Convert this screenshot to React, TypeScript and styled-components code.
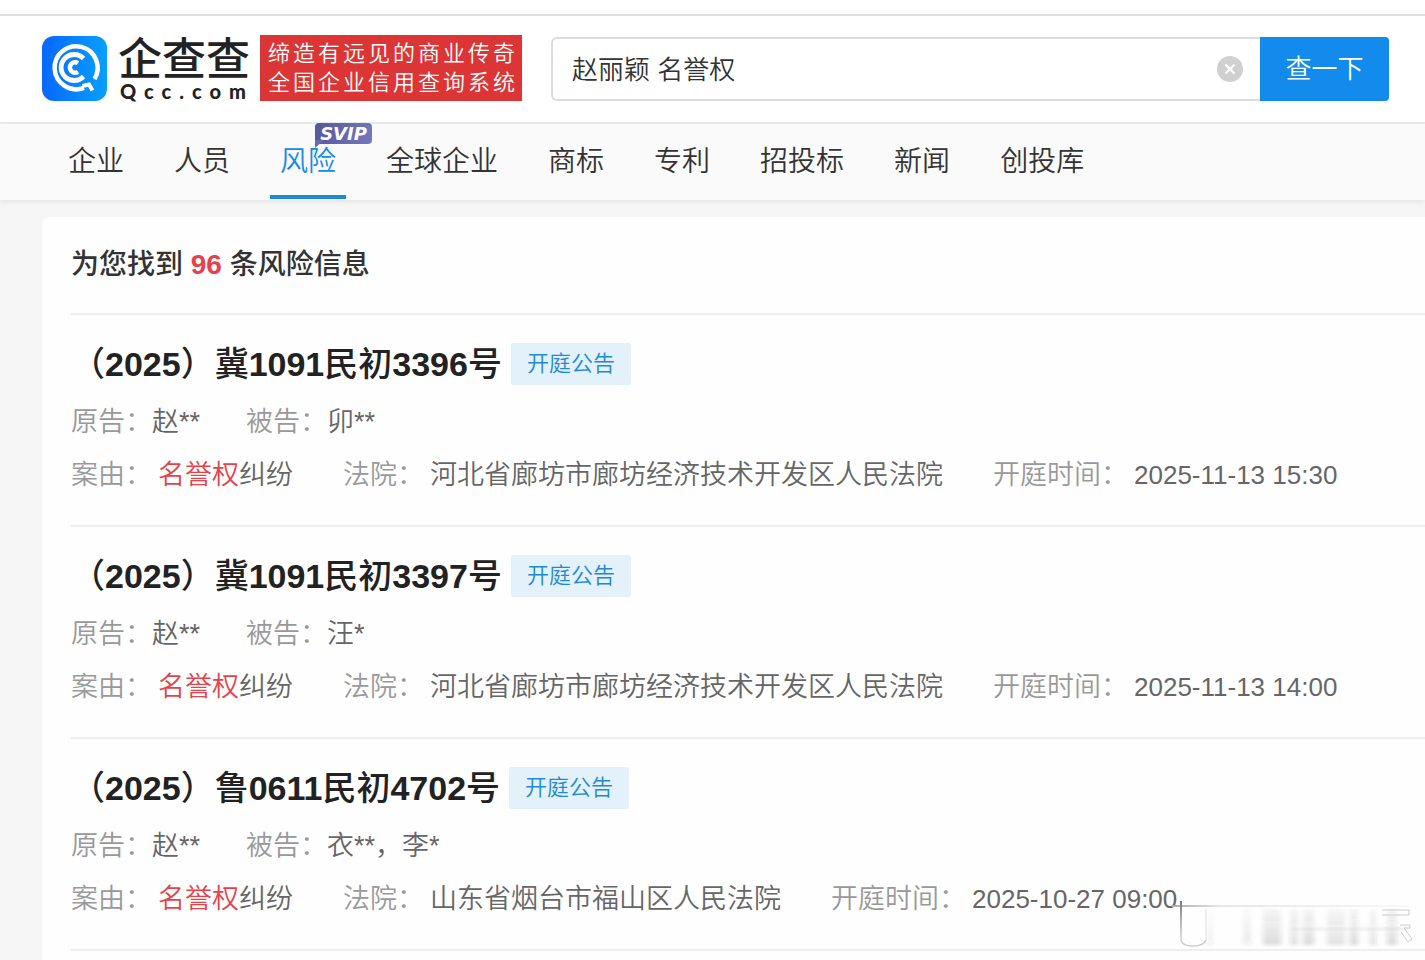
import React from "react";
import styled, { createGlobalStyle } from "styled-components";

const GlobalStyle = createGlobalStyle`
  * { box-sizing: border-box; }
  body {
    margin: 0;
    background: #f6f6f6;
    color: #333;
    font-family: "Liberation Sans", "Noto Sans CJK SC", sans-serif;
    font-weight: 350;
  }
`;

const Page = styled.div`
  min-height: 100vh;
  display: flex;
  flex-direction: column;
`;

const TopStrip = styled.div`
  height: 16px;
  background: #fff;
  border-bottom: 2px solid #e0e0e0;
`;

const Header = styled.header`
  display: flex;
  align-items: flex-start;
  height: 108px;
  padding: 19px 36px 0 42px;
  background: #fff;
  border-bottom: 2px solid #ebebeb;
`;

const Brand = styled.a`
  display: flex;
  align-items: center;
  gap: 11px;
  height: 66px;
  color: #222;
  text-decoration: none;
`;

const BrandText = styled.span`
  display: flex;
  flex-direction: column;
`;

const BrandName = styled.span`
  font-size: 44px;
  line-height: 46px;
  font-weight: 500;
`;

const BrandDomain = styled.span`
  padding-left: 2px;
  font-family: "Lato", sans-serif;
  font-size: 20px;
  line-height: 16px;
  font-weight: 900;
  letter-spacing: 8px;
  margin-right: -8px;
`;

const Slogan = styled.p`
  margin: 0 29px 0 10px;
  padding: 4px 4px 4px 8px;
  background: #dc3535;
  color: #fff;
  font-size: 22px;
  line-height: 29px;
  letter-spacing: 3px;
  white-space: nowrap;
`;

const SearchForm = styled.form`
  flex: 1;
  display: flex;
  height: 64px;
  margin-top: 2px;
`;

const SearchField = styled.div`
  flex: 1;
  min-width: 0;
  display: flex;
  align-items: center;
  padding: 0 17px 0 19px;
  border: 2px solid #dcdcdc;
  border-right: 0;
  border-radius: 6px 0 0 6px;
`;

const SearchInput = styled.input`
  flex: 1;
  min-width: 0;
  border: 0;
  padding: 0 0 4px;
  outline: 0;
  background: none;
  color: #333;
  font: inherit;
  font-size: 26px;
`;

const ClearButton = styled.button`
  display: flex;
  padding: 0;
  border: 0;
  background: none;
`;

const SubmitButton = styled.button`
  width: 129px;
  padding: 0 0 6px;
  border: 0;
  border-radius: 0 4px 4px 0;
  background: #128bed;
  color: #fff;
  font: inherit;
  font-size: 26px;
`;

const Nav = styled.nav`
  display: flex;
  gap: 30px;
  height: 76px;
  padding: 0 58px;
  background: #fafafa;
  box-shadow: 0 2px 6px rgba(0, 0, 0, 0.08);
`;

const Tab = styled.a<{ $active?: boolean }>`
  position: relative;
  padding: 0 10px;
  font-size: 28px;
  line-height: 76px;
  height: 75px;
  white-space: nowrap;
  text-decoration: none;
  color: ${(p) => (p.$active ? "#128bed" : "#333")};
  border-bottom: 4px solid ${(p) => (p.$active ? "#1b8bd4" : "transparent")};
`;

const Badge = styled.span`
  position: absolute;
  left: 45px;
  top: -1px;
  width: 57px;
  height: 21px;
  border-radius: 4px;
  background: linear-gradient(100deg, #57579f, #7676bd);
  color: #fff;
  font-family: "DejaVu Sans", sans-serif;
  font-size: 18px;
  line-height: 21px;
  font-weight: 700;
  font-style: italic;
  text-align: center;
  &::after {
    content: "";
    position: absolute;
    left: 0;
    top: 17px;
    border-top: 8px solid #6a6ab0;
    border-right: 9px solid transparent;
  }
`;

const Results = styled.main`
  flex: 1;
  margin: 17px 0 0 42px;
  padding-left: 29px;
  border-radius: 8px 0 0 0;
  background: #fefefe;
`;

const ResultsTitle = styled.h1`
  margin: 0;
  font-size: 28px;
  line-height: 96px;
  font-weight: 500;
  em {
    font-style: normal;
    font-weight: 700;
    color: #e5434b;
  }
`;

const CaseList = styled.ul`
  position: relative;
  margin: 0;
  padding: 0;
  list-style: none;
  border-bottom: 2px solid #eee;
`;

const CaseItem = styled.li`
  padding: 28px 0 23px;
  border-top: 2px solid #eee;
`;

const CaseHead = styled.div`
  display: flex;
  align-items: center;
  gap: 9px;
  margin-bottom: 11px;
`;

const CaseNumber = styled.h2`
  margin: 0;
  color: #222;
  font-size: 34px;
  line-height: 42px;
  font-weight: 500;
  white-space: nowrap;
  b {
    font-weight: 700;
  }
`;

const Tag = styled.span`
  padding: 0 16px;
  border-radius: 2px;
  background: #e3f1fa;
  color: #1f8ad6;
  font-size: 22px;
  line-height: 42px;
`;

const FieldRow = styled.dl<{ $gap: number; $inner?: number }>`
  display: flex;
  gap: ${(p) => p.$gap}px;
  margin: 0;
  font-size: 27px;
  line-height: 53px;
  white-space: nowrap;
  > div {
    display: flex;
    gap: ${(p) => p.$inner ?? 0}px;
  }
`;

const Label = styled.dt`
  color: #999;
`;

const Value = styled.dd`
  margin: 0;
  color: #666;
`;

const TimeValue = styled(Value)`
  font-size: 26px;
`;

const Highlight = styled.mark`
  background: none;
  color: #e5434b;
`;

const SmudgeLayer = styled.svg`
  position: absolute;
  right: 0;
  bottom: -4px;
`;

const tabs = ["企业", "人员", "风险", "全球企业", "商标", "专利", "招投标", "新闻", "创投库"];

const cases = [
  { no: "（2025）冀1091民初3396号", plaintiff: "赵**", defendant: "卯**", court: "河北省廊坊市廊坊经济技术开发区人民法院", time: "2025-11-13 15:30" },
  { no: "（2025）冀1091民初3397号", plaintiff: "赵**", defendant: "汪*", court: "河北省廊坊市廊坊经济技术开发区人民法院", time: "2025-11-13 14:00" },
  { no: "（2025）鲁0611民初4702号", plaintiff: "赵**", defendant: "衣**，李*", court: "山东省烟台市福山区人民法院", time: "2025-10-27 09:00" },
];

const LogoMark = () => (
  <svg width="65" height="65" viewBox="0 0 65 65" aria-hidden="true">
    <defs>
      <linearGradient id="logo" x1="0" y1="0" x2="1" y2="0">
        <stop offset="0" stopColor="#0668ff" />
        <stop offset="1" stopColor="#08a0ff" />
      </linearGradient>
    </defs>
    <rect width="65" height="65" rx="12" fill="url(#logo)" />
    <g fill="none" stroke="#fff">
      <path d="M52.500 43A21.500 21.500 0 1 0 42 51.800" strokeWidth="4.500" />
      <path d="M40.500 50L47 48.500L50.500 54.500" strokeWidth="4" />
      <path d="M41.500 22.500A13 13 0 1 0 41.500 40.500" strokeWidth="4.800" />
      <path d="M36 27.200A5.200 5.200 0 1 0 36 35.800" strokeWidth="4.500" />
    </g>
  </svg>
);

// Vertical streaks of the smeared stamp: [x, width, opacity]
const streaks = [
  [38, 5, 0.06],
  [73, 8, 0.08],
  [93, 18, 0.16],
  [120, 8, 0.14],
  [133, 11, 0.16],
  [157, 18, 0.13],
  [180, 8, 0.17],
  [200, 6, 0.14],
  [217, 10, 0.16],
];

const Smudge = () => (
  <SmudgeLayer width="255" height="56" viewBox="0 0 255 56" aria-hidden="true">
    <defs>
      <filter id="soft" x="-10%" y="-10%" width="120%" height="120%">
        <feGaussianBlur stdDeviation="2 1.500" />
      </filter>
      <filter id="softLine" x="-10%" y="-20%" width="120%" height="140%">
        <feGaussianBlur stdDeviation="0.700" />
      </filter>
      <linearGradient id="streak" x1="0" y1="0" x2="0" y2="1">
        <stop offset="0" stopColor="#333" stopOpacity="0.200" />
        <stop offset="1" stopColor="#333" />
      </linearGradient>
      <linearGradient id="edge" x1="0" y1="0" x2="0" y2="1">
        <stop offset="0" stopColor="#777" />
        <stop offset="0.500" stopColor="#b4b4b4" />
        <stop offset="1" stopColor="#e4e4e4" />
      </linearGradient>
      <linearGradient id="rule" x1="0" y1="0" x2="1" y2="0">
        <stop offset="0" stopColor="#aaa" />
        <stop offset="0.200" stopColor="#e6e6e6" />
        <stop offset="1" stopColor="#f8f8f8" />
      </linearGradient>
    </defs>
    <g filter="url(#soft)">
      {streaks.map(([x, w, o]) => (
        <rect key={x} x={x} y="12" width={w} height="36" fill="url(#streak)" opacity={o} />
      ))}
      <rect x="120" y="31" width="118" height="2" fill="#ccc" opacity="0.500" />
    </g>
    <g filter="url(#softLine)">
      <rect x="2" y="8" width="236" height="2" fill="url(#rule)" />
      <rect x="10" y="4" width="2" height="40" fill="url(#edge)" />
      <g fill="none" stroke="#ccc">
        <path d="M11 43q1 6 12 6t13-6" strokeWidth="1.500" />
        <path d="M36 12v31" stroke="#eee" strokeWidth="2" />
        <path d="M212 13h27v5h-27" />
        <path d="M230 28h10v3h-6l8 11-4 3-7-10" />
      </g>
    </g>
  </SmudgeLayer>
);

const renderCaseNumber = (no: string) =>
  no.split(/(\d+)/).map((part, i) => (/\d/.test(part) ? <b key={i}>{part}</b> : part));

export default function App() {
  return (
    <Page>
      <GlobalStyle />
      <TopStrip />
      <Header>
        <Brand href="#">
          <LogoMark />
          <BrandText>
            <BrandName>企查查</BrandName>
            <BrandDomain>Qcc.com</BrandDomain>
          </BrandText>
        </Brand>
        <Slogan>
          缔造有远见的商业传奇
          <br />
          全国企业信用查询系统
        </Slogan>
        <SearchForm>
          <SearchField>
            <SearchInput aria-label="搜索" defaultValue="赵丽颖 名誉权" />
            <ClearButton type="button" aria-label="清除">
              <svg width="26" height="26" viewBox="0 0 26 26">
                <circle cx="13" cy="13" r="13" fill="#d0d0d0" />
                <path d="M8.500 8.500l9 9M17.500 8.500l-9 9" stroke="#fff" strokeWidth="2.200" />
              </svg>
            </ClearButton>
          </SearchField>
          <SubmitButton type="button">查一下</SubmitButton>
        </SearchForm>
      </Header>
      <Nav>
        {tabs.map((t) => (
          <Tab key={t} href="#" $active={t === "风险"}>
            {t}
            {t === "风险" && <Badge>SVIP</Badge>}
          </Tab>
        ))}
      </Nav>
      <Results>
        <ResultsTitle>
          为您找到 <em>96</em> 条风险信息
        </ResultsTitle>
        <CaseList>
          {cases.map((c) => (
            <CaseItem key={c.no}>
              <CaseHead>
                <CaseNumber>{renderCaseNumber(c.no)}</CaseNumber>
                <Tag>开庭公告</Tag>
              </CaseHead>
              <FieldRow $gap={46}>
                <div>
                  <Label>原告：</Label>
                  <Value>{c.plaintiff}</Value>
                </div>
                <div>
                  <Label>被告：</Label>
                  <Value>{c.defendant}</Value>
                </div>
              </FieldRow>
              <FieldRow $gap={50} $inner={6}>
                <div>
                  <Label>案由：</Label>
                  <Value>
                    <Highlight>名誉权</Highlight>纠纷
                  </Value>
                </div>
                <div>
                  <Label>法院：</Label>
                  <Value>{c.court}</Value>
                </div>
                <div>
                  <Label>开庭时间：</Label>
                  <TimeValue>{c.time}</TimeValue>
                </div>
              </FieldRow>
            </CaseItem>
          ))}
          <Smudge />
        </CaseList>
      </Results>
    </Page>
  );
}
